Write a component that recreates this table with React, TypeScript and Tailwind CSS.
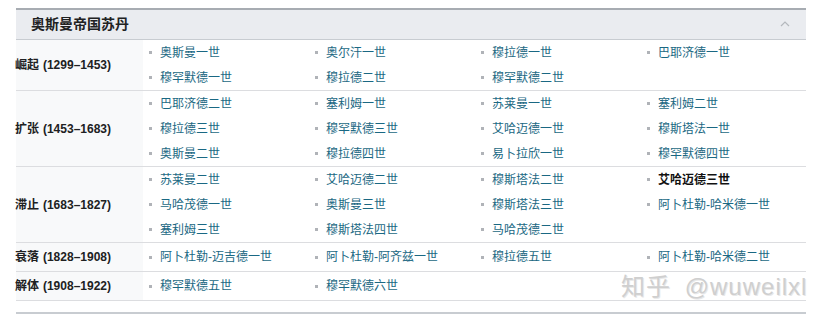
import React from "react"

type Item = { name: string; bold?: boolean }

const groups: { label: string; years: string; h: string; items: Item[] }[] = [
  {
    label: "崛起",
    years: "(1299–1453)",
    h: "h-[51px]",
    items: ["奥斯曼一世", "奥尔汗一世", "穆拉德一世", "巴耶济德一世", "穆罕默德一世", "穆拉德二世", "穆罕默德二世"].map((name) => ({ name })),
  },
  {
    label: "扩张",
    years: "(1453–1683)",
    h: "h-[76px]",
    items: ["巴耶济德二世", "塞利姆一世", "苏莱曼一世", "塞利姆二世", "穆拉德三世", "穆罕默德三世", "艾哈迈德一世", "穆斯塔法一世", "奥斯曼二世", "穆拉德四世", "易卜拉欣一世", "穆罕默德四世"].map((name) => ({ name })),
  },
  {
    label: "滞止",
    years: "(1683–1827)",
    h: "h-[76px]",
    items: [
      { name: "苏莱曼二世" },
      { name: "艾哈迈德二世" },
      { name: "穆斯塔法二世" },
      { name: "艾哈迈德三世", bold: true },
      { name: "马哈茂德一世" },
      { name: "奥斯曼三世" },
      { name: "穆斯塔法三世" },
      { name: "阿卜杜勒-哈米德一世" },
      { name: "塞利姆三世" },
      { name: "穆斯塔法四世" },
      { name: "马哈茂德二世" },
    ],
  },
  {
    label: "衰落",
    years: "(1828–1908)",
    h: "h-[29px]",
    items: ["阿卜杜勒-迈吉德一世", "阿卜杜勒-阿齐兹一世", "穆拉德五世", "阿卜杜勒-哈米德二世"].map((name) => ({ name })),
  },
  {
    label: "解体",
    years: "(1908–1922)",
    h: "h-[29px]",
    items: ["穆罕默德五世", "穆罕默德六世"].map((name) => ({ name })),
  },
]

export default function App() {
  return (
    <div
      className="relative w-[822px] h-[318px] bg-white pt-2 pl-4 overflow-hidden"
      style={{ fontFamily: '"Liberation Sans", "Noto Sans CJK SC", sans-serif' }}
    >
      <div className="w-[790px]">
        <div className="border-t-2 border-[#a7acb2]"></div>
        <div className="h-[30px] bg-[#eaecf0] border-b border-[#c8ccd1] flex items-center justify-between pl-[15px] pr-[16px]">
          <span className="text-[14px] font-bold text-[#202122]">奥斯曼帝国苏丹</span>
          <svg width="10" height="6" viewBox="0 0 10 6" className="mb-[2px]">
            <polyline points="1,5 5,1 9,5" fill="none" stroke="#b4b8bd" strokeWidth="1.2" />
          </svg>
        </div>

        {groups.map((g) => (
          <div key={g.label} className={`flex border-b border-[#dcdde0] ${g.h}`}>
            <div className="w-[127px] shrink-0 bg-[#f8f9fa] flex items-center justify-end pr-[32px] text-[12px] font-bold text-[#202122] whitespace-nowrap">
              <span>{g.label}</span>
              <span className="ml-[4px]">{g.years}</span>
            </div>
            <div className="flex-1 grid grid-cols-[repeat(4,166px)] auto-rows-[25px] content-center pl-[6px] overflow-hidden">
              {g.items.map((it) => (
                <div key={it.name} className="flex items-center text-[12px] whitespace-nowrap">
                  <span className="w-[3px] h-[3px] bg-[#b0b3b8] mr-[8px] shrink-0"></span>
                  <span className={it.bold ? "font-bold text-[#111]" : "text-[#1a6883]"}>{it.name}</span>
                </div>
              ))}
            </div>
          </div>
        ))}

        <div className="mt-[11px] border-t-2 border-[#c8ccd1]"></div>
      </div>

      <div className="absolute left-[621px] top-[272px] text-[24px] leading-[30px] text-[#cfcfcf] tracking-[1px] whitespace-nowrap [text-shadow:1px_1px_0_#e8e8e8]">
        知乎 <span className="ml-[6px]">@wuweilxl</span>
      </div>
    </div>
  )
}
